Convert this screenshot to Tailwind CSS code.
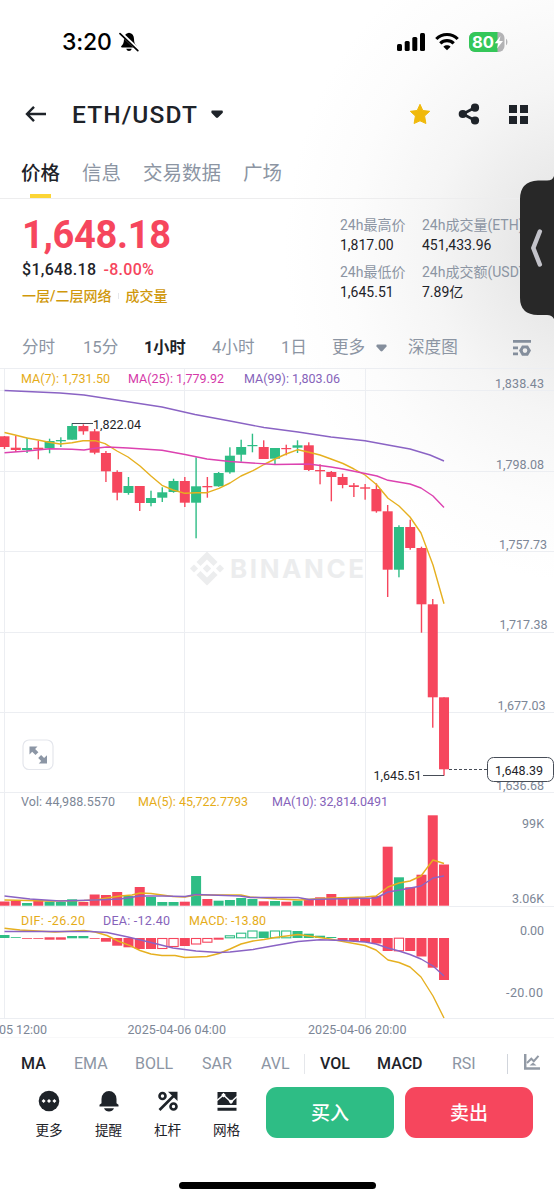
<!DOCTYPE html>
<html lang="zh-CN">
<head>
    <meta charset="UTF-8">
    <meta name="viewport" content="width=device-width, initial-scale=1.0">
    <title>ETH/USDT</title>
    <script src="https://cdn.jsdelivr.net/npm/@tailwindcss/browser@4"></script>
</head>
<body class="relative w-[554px] h-[1200px] overflow-hidden bg-white bg-[radial-gradient(290px_330px_at_575px_250px,#dcdcdc_0%,#eaeaea_24%,#f5f5f5_50%,#fcfcfc_78%,#ffffff_100%)] font-[Roboto,'Noto_Sans_CJK_SC',sans-serif] text-[#1e2329]">

    <!-- Status bar -->
    <div class="h-[83px] pl-[62px] pr-[46px] flex items-center justify-between">
        <div class="flex items-center gap-[6px]">
            <span class="pt-px w-[51px] font-[Inter,sans-serif] font-medium text-[23px] leading-none tracking-[-0.2px] text-black">3:20</span>
            <svg class="w-5 h-5" viewBox="0 0 20 20">
                <path d="M10 0.8c-3.4.5-5 3-5 6.2 0 3.500-.9 5.300-2.600 7 -.6.7-.3 1.500.6 1.500h14c.9 0 1.200-.8.6-1.500 -1.700-1.700-2.600-3.500-2.600-7 0-3.200-1.600-5.700-5-6.200z M7.300 16.800h5.400c-.4 1.500-1.400 2.200-2.700 2.200s-2.300-.7-2.700-2.200z" fill="#000"/>
                <path d="M1.800 1.200L19.500 18" stroke="#fff" stroke-width="3.600"/>
                <path d="M1 1.600L18.800 18.600" stroke="#000" stroke-width="1.700" stroke-linecap="round"/>
            </svg>
        </div>
        <div class="flex items-center gap-[10px]">
            <svg class="w-7 h-5" viewBox="0 0 28 20">
                <rect x="0" y="12" width="5" height="7" rx="1.500"/>
                <rect x="7.700" y="9" width="5" height="10" rx="1.500"/>
                <rect x="15.300" y="5" width="5" height="14" rx="1.500"/>
                <rect x="23" y="1" width="5" height="18" rx="1.500"/>
            </svg>
            <svg class="w-6 h-5" viewBox="0 0 24 20" fill="none" stroke="#000" stroke-width="3.200">
                <path d="M1.300 7C7.200 1 16.800 1 22.700 7"/>
                <path d="M5.300 11.300c3.700-3.700 9.700-3.700 13.400 0"/>
                <path d="M12 18.300l-3.600-3.600c2-1.900 5.200-1.900 7.200 0z" fill="#000" stroke="none"/>
            </svg>
            <svg class="w-[39px] h-5" viewBox="0 0 39 20">
                <rect x="0" y="0" width="35.500" height="20" rx="6" fill="#b3b3b5"/>
                <path d="M6 0H28.500V20H6a6 6 0 0 1-6-6V6a6 6 0 0 1 6-6z" fill="#34c759"/>
                <path d="M37 6.800c1.900.8 1.900 5.600 0 6.400z" fill="#b3b3b5"/>
                <text x="3" y="15.600" textLength="22" lengthAdjust="spacingAndGlyphs" font-family="Inter" font-weight="700" font-size="15.500" fill="#fff">80</text>
                <path d="M31.500 4L25.800 11.300h3.500L28 16.500l6-7.600h-3.700z" fill="#fff"/>
            </svg>
        </div>
    </div>

    <!-- Pair header -->
    <div class="h-[63px] pl-[25px] pr-[26px] pb-px flex items-center">
        <svg class="w-[22px] h-[18px]" viewBox="0 0 22 18" fill="none" stroke="#1e2329" stroke-width="2.400">
            <path d="M21 9H2.500M9 1.800L2 9l7 7.200"/>
        </svg>
        <h1 class="ml-[25px] pt-[3px] w-[127px] whitespace-nowrap text-[24.5px] leading-none font-medium tracking-[1.1px]">ETH/USDT</h1>
        <svg class="ml-[12px] w-3 h-2" viewBox="0 0 12 8"><path d="M1 .5h10q.8 0 .8.800v1.500L7 7.500q-1 .8-2 0L.4 2.800V1.300q0-.8.6-.8z" fill="#1e2329"/></svg>
        <svg class="ml-auto w-[22px] h-[22px]" viewBox="0 0 22 22">
            <path d="M11 1.300l2.800 6.200 6.900.8-5.100 4.700 1.300 7.500L11 17.800l-5.900 2.700 1.300-7.500L1.300 8.300l6.900-.8z" fill="#f0b90b" stroke="#f0b90b" stroke-width="1" stroke-linejoin="round"/>
        </svg>
        <svg class="ml-[27px] w-[22px] h-[22px]" viewBox="0 0 22 22" fill="#1e2329">
            <path d="M5 11l12-6.500M5 11l12 6.500" stroke="#1e2329" stroke-width="2.600"/>
            <circle cx="4.800" cy="11" r="4.100"/><circle cx="17" cy="4.700" r="4.100"/><circle cx="17" cy="17.500" r="4.100"/>
        </svg>
        <div class="ml-[29px] grid grid-cols-2 gap-[3px] w-[19px] h-[19px]">
            <i class="bg-[#1e2329]"></i><i class="bg-[#1e2329]"></i><i class="bg-[#1e2329]"></i><i class="bg-[#1e2329]"></i>
        </div>
    </div>

    <!-- Tabs -->
    <div class="h-[53px] pl-[21px] flex gap-[22px] border-b border-[#ededee] text-[19.5px] text-[#8c95a3]">
        <div class="relative pt-[3px] flex items-center font-medium text-[#1e2329]">价格<i class="absolute left-[9px] bottom-0 w-[21px] h-1 bg-[#fcd535]"></i></div>
        <div class="pt-[3px] flex items-center">信息</div>
        <div class="pt-[3px] flex items-center">交易数据</div>
        <div class="pt-[3px] flex items-center">广场</div>
    </div>

    <!-- Price and 24h stats -->
    <div class="h-[127px] pl-[22px] flex">
        <div class="w-[318px] pt-[16px]">
            <div class="text-[38px] leading-[40px] font-bold tracking-[-0.3px] text-[#f6465d]">1,648.18</div>
            <div class="mt-[5px] flex gap-[7px] text-[16px] leading-[20px] font-medium">
                <span class="tracking-[0.3px]">$1,648.18</span><span class="tracking-[0.3px] text-[#f6465d]">-8.00%</span>
            </div>
            <div class="mt-[6px] flex items-center text-[14px] leading-[20px] font-medium text-[#d0980b]">
                <span>一层/二层网络</span><i class="ml-[7px] mr-[6px] w-px h-[6px] bg-gray-200"></i><span>成交量</span>
            </div>
        </div>
        <div class="w-[82px] pt-[16px] text-[14px] leading-[20px] whitespace-nowrap">
            <div class="text-[#8c95a3]">24h最高价</div>
            <div>1,817.00</div>
            <div class="mt-[7px] text-[#8c95a3]">24h最低价</div>
            <div>1,645.51</div>
        </div>
        <div class="w-[98px] pt-[16px] text-[14px] leading-[20px] whitespace-nowrap">
            <div class="text-[#8c95a3]">24h成交量(ETH)</div>
            <div>451,433.96</div>
            <div class="mt-[7px] text-[#8c95a3]">24h成交额(USDT)</div>
            <div>7.89亿</div>
        </div>
    </div>

    <!-- Intervals -->
    <div class="h-[42px] pt-[2px] pl-[22px] pr-[23px] flex items-center gap-[27px] whitespace-nowrap text-[16.6px] text-[#8c95a3]">
        <span class="w-[34px]">分时</span>
        <span class="w-[34px]">15分</span>
        <span class="w-[41px] font-bold text-[16.2px] text-[#1e2329]">1小时</span>
        <span class="w-[42px]">4小时</span>
        <span class="w-[24px]">1日</span>
        <span class="flex items-center gap-[11px] w-[57px]">更多
            <svg class="w-[11px] h-2" viewBox="0 0 11 8"><path d="M.5 1.500Q.5.500 1.500.500h8q1 0 1 1v1L6.500 7q-1 .8-2 0L.5 2.500z" fill="#848e9c"/></svg>
        </span>
        <span class="-ml-[8px]">深度图</span>
        <svg class="ml-auto w-[18px] h-4" viewBox="0 0 18 16" fill="#848e9c">
            <path d="M0 0h18v2.700H0zM0 6.500h5v2.700H0zM0 12.500h5v2.700H0z"/>
            <path fill-rule="evenodd" d="M9 5.500h6l3 5-3 5.200H9l-3-5.200zM12 8.300a2.300 2.300 0 1 0 0 4.600 2.300 2.300 0 0 0 0-4.600z"/>
        </svg>
    </div>

    <!-- Chart: one user unit per pixel, y counted from the top of the screen -->
    <svg id="chart" class="block w-[554px] h-[673px]" viewBox="0 368 554 673" font-family="Roboto" font-size="12.500" fill="#7c8696">
        <g stroke="#eceef2" stroke-width="1">
            <path d="M0 368.500H554M0 390.500H554M0 471.500H554M0 551.500H554M0 632.500H554M0 712.500H554M0 792.500H554M0 906.500H554M0 1018.500H554"/>
            <path d="M4.500 368V1018M184.500 368V1018M365.500 368V1018"/>
            <path d="M0 1037.500H554" stroke="#f8f8f9"/>
        </g>

        <!-- Watermark -->
        <g fill="#ecedee">
            <path d="M207 551.500l10.500 10.500-4 4-6.500-6.500-6.500 6.500-4-4zM194 564.500l4 4-4 4-4-4zM220 564.500l4 4-4 4-4-4zM207 564.300l4.200 4.200-4.200 4.200-4.200-4.200zM200.500 571l6.500 6.500 6.500-6.500 4 4L207 585.500 196.500 575z"/>
            <text x="230" y="578" font-family="Inter" font-size="26" font-weight="700" textLength="134">BINANCE</text>
        </g>

        <g id="bars"></g>
        <g id="lines" fill="none" stroke-width="1.400" stroke-linejoin="round"></g>

        <!-- High / low marks and last price -->
        <path d="M72 423.500H93M423 775.500H444" stroke="#474d57"/>
        <path d="M449 769.500H487" stroke="#474d57" stroke-dasharray="3 2"/>
        <g fill="#1e2329">
            <text x="93" y="429" textLength="48">1,822.04</text>
            <text x="373.500" y="780" textLength="48">1,645.51</text>
        </g>

        <g>
            <text x="495" y="388" textLength="49">1,838.43</text>
            <text x="496" y="468.500" textLength="48">1,798.08</text>
            <text x="499" y="549" textLength="48">1,757.73</text>
            <text x="499.500" y="629" textLength="48">1,717.38</text>
            <text x="497.500" y="710" textLength="48">1,677.03</text>
            <text x="496" y="790" textLength="48">1,636.68</text>
            <text x="522" y="828" textLength="22">99K</text>
            <text x="512" y="903" textLength="32">3.06K</text>
            <text x="520" y="935" textLength="24">0.00</text>
            <text x="506" y="997" textLength="37">-20.00</text>
            <text x="-1" y="1034" textLength="48">05 12:00</text>
            <text x="127.500" y="1034" textLength="98.500">2025-04-06 04:00</text>
            <text x="308" y="1034" textLength="98.500">2025-04-06 20:00</text>
        </g>
        <rect x="487.500" y="757.500" width="66" height="24" rx="6" fill="#fff" stroke="#474d57"/>
        <text x="495" y="774.500" textLength="48" fill="#1e2329">1,648.39</text>

        <!-- Legends -->
        <text x="21" y="383" textLength="89" fill="#e5ac18">MA(7): 1,731.50</text>
        <text x="128" y="383" textLength="96" fill="#d53aa9">MA(25): 1,779.92</text>
        <text x="244" y="383" textLength="96" fill="#8663ba">MA(99): 1,803.06</text>
        <text x="21" y="805.500" textLength="94">Vol: 44,988.5570</text>
        <text x="138" y="805.500" textLength="110" fill="#e5ac18">MA(5): 45,722.7793</text>
        <text x="272" y="805.500" textLength="116" fill="#8663ba">MA(10): 32,814.0491</text>
        <text x="21" y="925" textLength="64" fill="#e5ac18">DIF: -26.20</text>
        <text x="103" y="925" textLength="67" fill="#8663ba">DEA: -12.40</text>
        <text x="189" y="925" textLength="77" fill="#e5ac18">MACD: -13.80</text>

        <!-- Full screen button -->
        <rect x="23" y="740" width="30" height="29.500" rx="6" fill="#fff" stroke="#e4e6ec" stroke-width="1.200"/>
        <path d="M29.500 746.500h8l-2.400 2.400 3.300 3.300-2.900 2.900-3.300-3.300-2.700 2.700zM47 763.500h-8.300l2.500-2.500-3-3 2.900-2.900 3 3 2.900-2.900z" fill="#8c96a5"/>
    </svg>

    <!-- Indicators -->
    <div class="h-[43px] pt-[2px] pl-[21px] pr-[14px] flex items-center text-[16px] text-[#8c95a3]">
        <span class="w-[53px] font-medium text-[#1e2329]">MA</span>
        <span class="w-[61px]">EMA</span>
        <span class="w-[67px]">BOLL</span>
        <span class="w-[59px]">SAR</span>
        <span class="w-[43px]">AVL</span>
        <i class="w-px h-5 bg-gray-200"></i>
        <span class="ml-[15px] w-[57px] font-medium text-[#1e2329]">VOL</span>
        <span class="w-[75px] font-medium text-[#1e2329]">MACD</span>
        <span class="w-[55px]">RSI</span>
        <i class="w-px h-5 bg-gray-300"></i>
        <svg class="ml-auto w-4 h-4 -mt-[3px]" viewBox="0 0 16 16">
            <path d="M1.200 0V14.500H16" fill="none" stroke="#929aa5" stroke-width="2.500"/>
            <path d="M3 9l4.300-4.300 2.500 2.500L14.500 1.800" fill="none" stroke="#929aa5" stroke-width="2"/>
            <path d="M5.500 11.500l3.500-3 3.500 3z" fill="#929aa5"/>
        </svg>
    </div>

    <!-- Bottom actions -->
    <div class="h-[61px] pl-[19px] pt-[3px] flex">
        <div class="flex pt-[3px] mr-[-10px] text-[13.6px] leading-[18px]">
            <div class="w-[60px] flex flex-col items-center gap-[9px]">
                <svg class="w-[22px] h-[22px]" viewBox="0 0 22 22"><circle cx="11" cy="11" r="10.300" fill="#1e2329"/><path d="M5.600 9l2 2-2 2-2-2zM11 9l2 2-2 2-2-2zM16.400 9l2 2-2 2-2-2z" fill="#fff"/></svg>
                <span>更多</span>
            </div>
            <div class="w-[59px] flex flex-col items-center gap-[9px]">
                <svg class="w-[22px] h-[22px]" viewBox="0 0 22 22" fill="#1e2329"><path d="M3.500 9a7.500 8 0 0 1 15 0v4.200l2 1.600v1.700h-19v-1.700l2-1.600zM6 18.300h10q-1.500 3.200-5 3.200t-5-3.200z"/></svg>
                <span>提醒</span>
            </div>
            <div class="w-[59px] flex flex-col items-center gap-[9px]">
                <svg class="w-[22px] h-[22px]" viewBox="0 0 22 22" fill="none" stroke="#1e2329" stroke-width="2.600">
                    <circle cx="5.500" cy="6" r="3"/><circle cx="16.500" cy="16.500" r="3"/>
                    <path d="M2.500 20L17 5.500"/><path d="M11 1.800h9.500V11z" fill="#1e2329" stroke="none"/>
                </svg>
                <span>杠杆</span>
            </div>
            <div class="w-[59px] flex flex-col items-center gap-[9px]">
                <svg class="w-[22px] h-[22px]" viewBox="0 0 22 22">
                    <path d="M1.500 2h19v13h-19zM1.500 17.800h19v3h-19z" fill="#1e2329"/>
                    <path d="M1 10.500l6.500-5.500 7.500 7 6-5.500" fill="none" stroke="#fff" stroke-width="1.500"/>
                    <path d="M7.500 2.800l2.300 2.300-2.300 2.300-2.300-2.300zM15 9.500l2.300 2.300-2.300 2.300-2.300-2.300z" fill="#fff"/>
                </svg>
                <span>网格</span>
            </div>
        </div>
        <button class="ml-[20px] pt-[3px] w-[128px] h-[51px] rounded-[11px] bg-[#2ebd85] text-white text-[19px] font-medium">买入</button>
        <button class="ml-[11px] pt-[3px] w-[128px] h-[51px] rounded-[11px] bg-[#f6465d] text-white text-[19px] font-medium">卖出</button>
    </div>

    <!-- Home indicator -->
    <div class="mt-[37px] mx-auto w-[197px] h-[7px] rounded-full bg-black"></div>

    <!-- Side handle -->
    <svg class="absolute right-0 top-[174px] w-[35px] h-[148px]" viewBox="0 0 35 148">
        <path d="M35 2C34 5 32 6.500 28 6.500H19Q1 7.500 1 25V124Q1 140.500 19 141H28Q33 141 35 145z" fill="#282828"/>
        <path d="M20.800 57.500L14.300 74l6.500 16.500" fill="none" stroke="#c3c3ca" stroke-width="4.500" stroke-linecap="round" stroke-linejoin="round"/>
    </svg>

    <script>
        const UP = '#2ebd85';
        const DOWN = '#f6465d';
        const STEP = 11.27;

        // Candles: colour, body top, body bottom, wick top, wick bottom
        const candles = [
            ['r', 436.3, 447, 436, 449], ['r', 447.7, 450, 435.7, 452], ['g', 448, 450, 437.7, 453], ['r', 447.7, 449.3, 440.7, 459.3],
            ['g', 441, 448.3, 438.7, 453.3], ['g', 440, 441.3, 437.3, 447], ['g', 426, 439.7, 423.3, 439.7], ['r', 426, 431.3, 424.3, 434.7],
            ['r', 431.3, 452.7, 429, 454.3], ['r', 453, 471.3, 451, 482], ['r', 472, 492.7, 470.3, 500.3], ['g', 486, 493, 477, 494.7],
            ['r', 486, 503, 486, 511], ['g', 498, 503, 490.7, 506.3], ['g', 492.3, 497.7, 487.3, 502], ['g', 481, 492, 478.7, 492.7],
            ['r', 481, 502.7, 477, 507], ['g', 486.3, 502.7, 457.3, 538.3], ['r', 486, 487.3, 477, 497.7], ['g', 473, 486.3, 472, 486.7],
            ['g', 455.7, 472.3, 447.3, 473.7], ['g', 447, 454.7, 439.7, 461.7], ['g', 445, 446.2, 433.7, 452.3], ['r', 447, 459, 440.3, 459],
            ['g', 448, 458.7, 448, 464], ['r', 448, 449.2, 444.7, 455.3], ['g', 445.3, 447.7, 440.3, 453], ['r', 445.3, 470, 442.3, 471],
            ['r', 470, 471.3, 464.3, 484.3], ['r', 472, 477, 471, 501.3], ['r', 477, 485, 473.7, 488.3], ['r', 485.3, 487, 483, 497],
            ['r', 487.3, 488.7, 484, 499.7], ['r', 489, 511.3, 483.3, 512.7], ['r', 511.3, 569.7, 505, 597], ['g', 527, 569.7, 525.3, 577.3],
            ['r', 527, 548, 519.7, 549.7], ['r', 548, 604.3, 546.7, 632.7], ['r', 604.3, 697.3, 599, 727.7], ['r', 697.3, 769.3, 697.3, 775.7]
        ];

        // Top edge of each volume bar
        const volume = [
            901.5, 901, 903, 901, 901.5, 902, 899.3, 902, 894.5, 895, 892, 896, 887, 897, 902, 902, 901.7, 876, 899, 900.7,
            900, 898, 899, 901.3, 901, 901.7, 900.7, 900, 897.3, 894, 897.3, 898, 898.3, 896, 846.7, 877.3, 887.3, 874.7, 815.3, 864.5
        ];

        // MACD bars: colour, top, bottom, hollow
        const macd = [
            ['g', 935, 938], ['g', 937, 937.8], ['r', 938.2, 939], ['r', 938.2, 939], ['r', 937.3, 939.7], ['r', 937.3, 939.7],
            ['g', 936, 938.3], ['g', 936, 938.3], ['r', 938.2, 939], ['r', 938, 941.7], ['r', 938, 945.7], ['r', 938, 947.3],
            ['r', 938, 949], ['r', 938, 949], ['r', 938, 949, 1], ['r', 938, 947, 1], ['r', 938, 946], ['r', 938, 944.5, 1],
            ['r', 938, 942.7, 1], ['r', 937.7, 939.7], ['g', 935.3, 938.3, 1], ['g', 932.7, 938.3, 1], ['g', 930.5, 938.3, 1], ['g', 931.5, 938],
            ['g', 930.5, 938.3, 1], ['g', 930.5, 938.3, 1], ['g', 931, 938], ['g', 933.7, 938], ['g', 935.7, 938], ['g', 937, 938],
            ['r', 938, 940], ['r', 938, 941], ['r', 938, 942], ['r', 938, 943.5], ['r', 938, 951], ['r', 937.7, 951.3, 1],
            ['r', 938, 951], ['r', 938, 956.5], ['r', 938, 967.7], ['r', 938, 980]
        ];

        const lines = [
            // Price averages
            ['#e6b020', '4.5,432.5 15,435 27,438 38,440 49,442.3 60,444 72,442.7 83,440.7 95,440.7 105,443.7 117,451 128,457 140,466 151,476 162,485.3 173,490 185,493.3 196,492.7 207,492.7 219,488.3 230,483 241,476 253,470.7 264,464.5 275,459 286,454 298,449.7 309,452.3 320,455 331,459 343,463.5 354,469 365,475 377,485 388,498.3 399,506 410,517 421,533 433,565 444,603.7'],
            ['#dc42b0', '4.5,452.7 27,451 50,448.7 72,449.3 84,450 95,448.3 107,447 128,448 162,450.3 185,454.5 207,459 230,461.5 252,463 275,464.5 309,464 331,467 343,469 365,473.5 377,476 388,480.3 410,484 421,488 433,496 444,507.5'],
            ['#8a63c4', '4.5,390.5 60,393 84,395 110,399 162,407 195,414.5 230,421 264,427.5 298,432 331,437 365,440.7 388,445 410,449 430,455 444,461'],
            // Volume averages
            ['#e6b020', '4.5,900 50,901 84,900.5 95,900 107,898 120,896 132,895 140,893 151,893.5 162,895 173,896.5 185,897 196,895 241,895 250,897 277,899 300,900 320,898.5 365,897 376,896 388,887 399,883 410,881 421,876 433,860 444,863.5'],
            ['#8a63c4', '4.5,896 30,899 60,901 95,900 120,899 140,896 162,896 185,896.5 196,894.5 240,896 250,897.5 298,897.5 309,899.5 376,898 388,892 400,890 421,886 433,878 444,876'],
            // DIF and DEA
            ['#e6b020', '4.5,928.3 20,930 55,932 84,930.5 95,932 107,935.5 118,941 130,945.7 140,950.5 151,954 162,955.5 175,955.5 185,957.5 207,956.5 219,953.5 230,949 241,944 253,941 264,939.5 275,937.5 298,934.5 309,936 330,939 343,941.5 365,945.5 376,950 388,960 399,962.5 410,967 421,977 433,996 444,1018'],
            ['#8a63c4', '4.5,931.5 50,931.5 90,931.5 107,932.5 128,937 151,942.5 173,948 196,951 219,952.5 230,952 253,949.5 275,945.5 298,941.5 320,939.7 343,940.5 365,942 376,944 388,948 399,951 410,954.5 421,959 433,966 444,976']
        ];

        const svgNS = 'http://www.w3.org/2000/svg';
        const bars = document.getElementById('bars');

        function add(parent, name, attrs) {
            const el = document.createElementNS(svgNS, name);
            for (const key in attrs) el.setAttribute(key, attrs[key]);
            parent.appendChild(el);
        }

        function rect(x, top, width, bottom, fill) {
            add(bars, 'rect', { x: x, y: top, width: width, height: bottom - top, fill: fill });
        }

        candles.forEach(function(c, i) {
            const x = 4.5 + i * STEP;
            const color = c[0] === 'g' ? UP : DOWN;
            rect(x - 0.7, c[3], 1.4, c[4], color);
            rect(x - 5, c[1], 10, c[2], color);
            rect(x - 5, volume[i], 10, 905.7, color);

            const m = macd[i];
            const mColor = m[0] === 'g' ? UP : DOWN;
            if (m[3]) {
                add(bars, 'rect', { x: x - 4.6, y: m[1] + 0.5, width: 9.2, height: m[2] - m[1] - 1, fill: '#fff', stroke: mColor, 'stroke-width': 1.1 });
            } else {
                rect(x - 5, m[1], 10, m[2], mColor);
            }
        });

        lines.forEach(function(l) {
            add(document.getElementById('lines'), 'polyline', { points: l[1], stroke: l[0] });
        });
    </script>
</body>
</html>
